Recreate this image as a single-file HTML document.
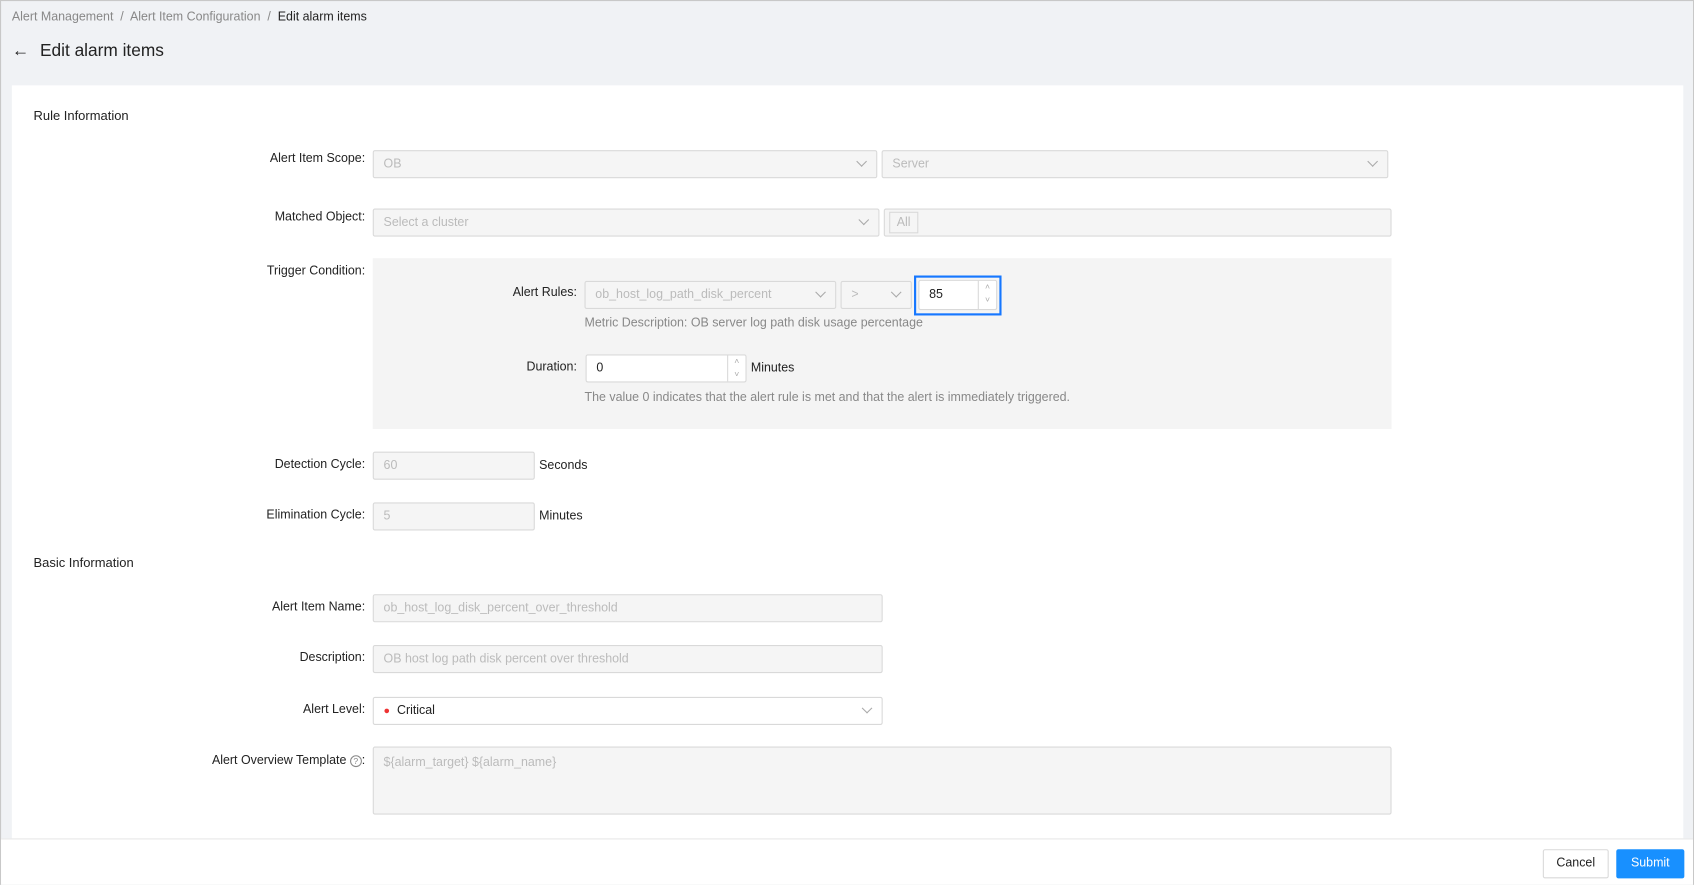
<!DOCTYPE html>
<html><head><meta charset="utf-8"><style>
*{box-sizing:border-box;margin:0;padding:0}
html,body{width:1694px;height:885px;overflow:hidden;background:#f0f2f5}
#w{position:absolute;left:0;top:0;width:1568px;height:819px;transform:scale(1.0804);transform-origin:0 0;font-family:"Liberation Sans",sans-serif;font-size:11.5px;color:#222;background:#f0f2f5;border:1px solid #c8c8c8}
.a{position:absolute}
.lbl{position:absolute;text-align:right;color:#222;font-size:11.5px}
.in{position:absolute;background:#f5f5f5;border:1px solid #d9d9d9;border-radius:2px;color:#bbb;font-size:11.5px;padding-left:9px;line-height:24px;height:26px}
.wh{background:#fff;color:#222}
.chev{position:absolute;right:10px;top:6px;width:7px;height:7px;border-right:1px solid #aaa;border-bottom:1px solid #aaa;transform:rotate(45deg)}
.hint{position:absolute;color:#888;font-size:11.5px}
.sp{position:absolute;right:0;top:0;width:17px;height:100%;border-left:1px solid #d9d9d9;font-size:8px;color:#aaa;text-align:center;line-height:12px}
</style></head><body><div id="w">
<div class="a" style="left:10px;top:9px;color:#888">Alert Management &nbsp;/&nbsp; Alert Item Configuration &nbsp;/&nbsp; <span style="color:#222">Edit alarm items</span></div>
<div class="a" style="left:10px;top:38px;font-size:16px">←</div>
<div class="a" style="left:36px;top:38px;font-size:16px;color:#222">Edit alarm items</div>
<div class="a" style="left:10px;top:78px;width:1547px;height:697px;background:#fff"></div>
<div class="a" style="left:30px;top:99px;font-size:12px">Rule Information</div>
<div class="lbl" style="right:1229px;top:140px">Alert Item Scope:</div>
<div class="in" style="left:344px;top:138px;width:467px">OB<i class="chev"></i></div>
<div class="in" style="left:815px;top:138px;width:469px">Server<i class="chev"></i></div>
<div class="lbl" style="right:1229px;top:194px">Matched Object:</div>
<div class="in" style="left:344px;top:192px;width:469px">Select a cluster<i class="chev"></i></div>
<div class="in" style="left:817px;top:192px;width:470px;padding-left:4px"><span style="border:1px solid #d9d9d9;padding:0 6px;line-height:18px;display:inline-block;margin-top:2px">All</span></div>
<div class="lbl" style="right:1229px;top:244px">Trigger Condition:</div>
<div class="a" style="left:344px;top:238px;width:943px;height:158px;background:#f4f4f4"></div>
<div class="lbl" style="right:1033px;top:264px">Alert Rules:</div>
<div class="in" style="left:540px;top:259px;width:233px">ob_host_log_path_disk_percent<i class="chev"></i></div>
<div class="in" style="left:777px;top:259px;width:66px">&gt;<i class="chev"></i></div>
<div class="a" style="left:845px;top:254px;width:81px;height:37px;border:2px solid #1677ff"></div>
<div class="in wh" style="left:849px;top:258px;width:73px;height:28px;line-height:26px">85<div class="sp">˄<br>˅</div></div>
<div class="hint" style="left:540px;top:292px">Metric Description: OB server log path disk usage percentage</div>
<div class="lbl" style="right:1033px;top:333px">Duration:</div>
<div class="in wh" style="left:541px;top:327px;width:149px">0<div class="sp">˄<br>˅</div></div>
<div class="a" style="left:694px;top:334px">Minutes</div>
<div class="hint" style="left:540px;top:361px">The value 0 indicates that the alert rule is met and that the alert is immediately triggered.</div>
<div class="lbl" style="right:1229px;top:423px">Detection Cycle:</div>
<div class="in" style="left:344px;top:417px;width:150px">60</div>
<div class="a" style="left:498px;top:424px">Seconds</div>
<div class="lbl" style="right:1229px;top:470px">Elimination Cycle:</div>
<div class="in" style="left:344px;top:464px;width:150px">5</div>
<div class="a" style="left:498px;top:471px">Minutes</div>
<div class="a" style="left:30px;top:513px;font-size:12px">Basic Information</div>
<div class="lbl" style="right:1229px;top:555px">Alert Item Name:</div>
<div class="in" style="left:344px;top:549px;width:472px">ob_host_log_disk_percent_over_threshold</div>
<div class="lbl" style="right:1229px;top:602px">Description:</div>
<div class="in" style="left:344px;top:596px;width:472px">OB host log path disk percent over threshold</div>
<div class="lbl" style="right:1229px;top:650px">Alert Level:</div>
<div class="in wh" style="left:344px;top:644px;width:472px"><span style="color:#e33;font-size:10px">●</span>&nbsp; Critical<i class="chev"></i></div>
<div class="lbl" style="right:1229px;top:697px">Alert Overview Template <span style="display:inline-block;width:11px;height:11px;border:1px solid #888;border-radius:50%;font-size:8px;line-height:9px;text-align:center;color:#888">?</span>:</div>
<div class="in" style="left:344px;top:690px;width:943px;height:63px;line-height:28px">${alarm_target} ${alarm_name}</div>
<div class="a" style="left:0;top:775px;width:1566px;height:43px;background:#fff;border-top:1px solid #e8e8e8"></div>
<div class="a" style="left:1427px;top:785px;width:61px;height:27px;border:1px solid #d9d9d9;border-radius:2px;background:#fff;text-align:center;line-height:25px">Cancel</div>
<div class="a" style="left:1495px;top:785px;width:63px;height:27px;border-radius:2px;background:#1890ff;color:#fff;text-align:center;line-height:27px">Submit</div>
</div></body></html>
